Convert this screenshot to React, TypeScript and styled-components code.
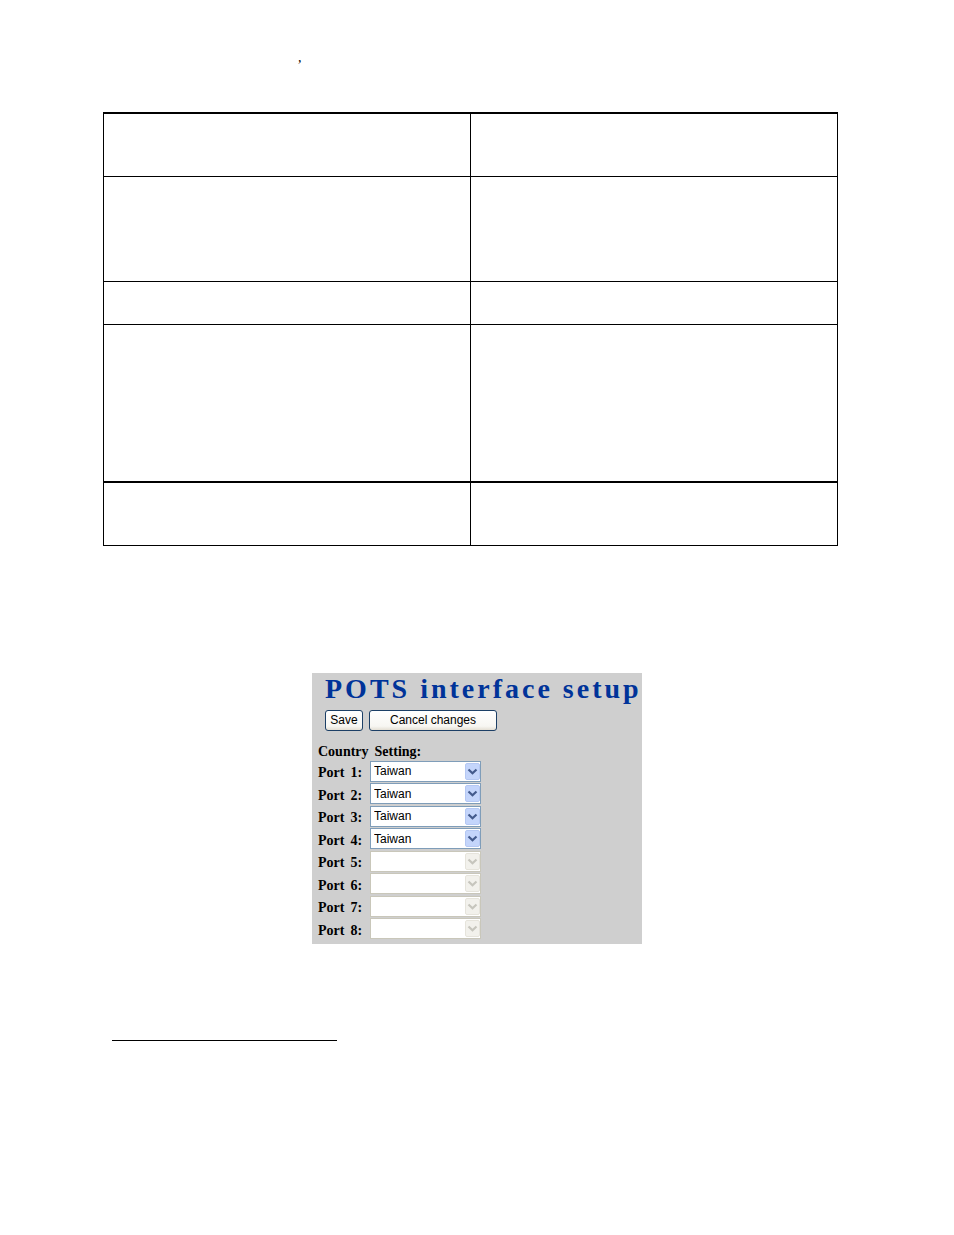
import React from 'react';
import styled, { createGlobalStyle } from 'styled-components';

const GlobalStyle = createGlobalStyle`
  *, *::before, *::after { box-sizing: border-box; }
  body {
    margin: 0;
    background: #fff;
    color: #000;
    font-family: "Liberation Serif", "Times New Roman", serif;
  }
`;

const Page = styled.main`
  display: flex;
  flex-direction: column;
  padding: 50px 116px 190px 103px;
`;

const RunningHead = styled.p`
  margin: 0 0 46px;
  padding-left: 195px;
  font-size: 14px;
  font-style: italic;
  line-height: 16px;
`;

const SpecTable = styled.table`
  width: 100%;
  table-layout: fixed;
  border-spacing: 0;
  border: solid #000;
  border-width: 0 1px 1px 0;
`;

const SpecCell = styled.td<{ $height: number; $heavy?: boolean }>`
  height: ${(p) => p.$height}px;
  padding: 0;
  border: solid #000;
  border-width: ${(p) => (p.$heavy ? 2 : 1)}px 0 0 1px;
`;

const Figure = styled.div`
  display: flex;
  justify-content: center;
  margin: 127px 0 96px;
  padding-left: 13px;
`;

const Panel = styled.form`
  width: 330px;
  padding: 0 0 4px 6px;
  background: #cfcfcf;
`;

const Title = styled.h1`
  margin: 0 0 5px 7px;
  color: #003399;
  font-size: 28px;
  font-weight: bold;
  letter-spacing: 3px;
  line-height: 32px;
  white-space: nowrap;
`;

const Actions = styled.div`
  display: flex;
  gap: 6px;
  margin-left: 7px;
`;

const ActionButton = styled.button<{ $wide?: boolean }>`
  width: ${(p) => (p.$wide ? 128 : 38)}px;
  height: 21px;
  padding: 0 0 2px;
  border: 1px solid #1c3f66;
  border-radius: 3px;
  background: linear-gradient(#fff, #f7f6f2 80%, #e4dfd4);
  color: #000;
  font: 12px/16px "Liberation Sans", Arial, sans-serif;
`;

const Ports = styled.fieldset`
  min-width: 0;
  margin: 0;
  padding: 13px 0 0;
  border: 0;
`;

const WordRow = styled.span`
  display: flex;
  gap: 6px;
`;

const Legend = styled.div`
  font-size: 14px;
  font-weight: bold;
  line-height: 16px;
`;

const PortList = styled.div`
  display: grid;
  grid-auto-rows: 1fr;
  height: 180px;
`;

const PortRow = styled.div`
  display: flex;
  align-items: center;
`;

const PortLabel = styled.label`
  width: 52px;
  padding-top: 4px;
  font-size: 14px;
  font-weight: bold;
  line-height: 16px;
`;

const SelectBox = styled.div`
  position: relative;
  display: flex;
`;

const CountrySelect = styled.select`
  width: 111px;
  height: 21px;
  padding: 0 18px 0 3px;
  appearance: none;
  border: 1px solid #7f9db9;
  border-radius: 0;
  background: #fff;
  color: #000;
  font: 12px/16px "Liberation Sans", Arial, sans-serif;
  opacity: 1;

  &:disabled {
    border-color: #c9c7ba;
  }
`;

const Arrow = styled.svg`
  position: absolute;
  top: 2px;
  right: 1px;
  pointer-events: none;
`;

const FootnoteRule = styled.hr`
  width: 225px;
  margin: 0 0 0 9px;
  border: 0;
  border-top: 1px solid #000;
`;

const rows = [
  { height: 64, heavy: true },
  { height: 105 },
  { height: 43 },
  { height: 157 },
  { height: 64, heavy: true },
];

const ports = [1, 2, 3, 4, 5, 6, 7, 8].map((n) => ({ n, enabled: n <= 4 }));

function DropArrow({ enabled }: { enabled: boolean }) {
  return (
    <Arrow width="15" height="17" viewBox="0 0 15 17" aria-hidden="true">
      <rect
        x="0.5"
        y="0.5"
        width="14"
        height="16"
        rx="1.5"
        fill={enabled ? '#c4d5fb' : '#f2f1ec'}
        stroke={enabled ? '#b5c8f3' : '#e6e4dc'}
      />
      <path
        d="M3.5 6.5 L7.5 10.3 L11.5 6.5"
        fill="none"
        stroke={enabled ? '#435a8c' : '#c6c5bd'}
        strokeWidth="2.2"
      />
    </Arrow>
  );
}

export default function App() {
  return (
    <>
      <GlobalStyle />
      <Page>
        <RunningHead>,</RunningHead>
        <SpecTable>
          <tbody>
            {rows.map((row, i) => (
              <tr key={i}>
                <SpecCell $height={row.height} $heavy={row.heavy} />
                <SpecCell $height={row.height} $heavy={row.heavy} />
              </tr>
            ))}
          </tbody>
        </SpecTable>
        <Figure>
          <Panel onSubmit={(e) => e.preventDefault()}>
            <Title>POTS interface setup</Title>
            <Actions>
              <ActionButton type="submit">Save</ActionButton>
              <ActionButton type="reset" $wide>Cancel changes</ActionButton>
            </Actions>
            <Ports aria-labelledby="country-setting">
              <Legend id="country-setting">
                <WordRow>
                  <span>Country</span>
                  <span>Setting:</span>
                </WordRow>
              </Legend>
              <PortList>
                {ports.map(({ n, enabled }) => (
                  <PortRow key={n}>
                    <PortLabel htmlFor={`port-${n}`}>
                      <WordRow>
                        <span>Port</span>
                        <span>{n}:</span>
                      </WordRow>
                    </PortLabel>
                    <SelectBox>
                      <CountrySelect id={`port-${n}`} disabled={!enabled}>
                        <option>{enabled ? 'Taiwan' : ''}</option>
                      </CountrySelect>
                      <DropArrow enabled={enabled} />
                    </SelectBox>
                  </PortRow>
                ))}
              </PortList>
            </Ports>
          </Panel>
        </Figure>
        <FootnoteRule />
      </Page>
    </>
  );
}
